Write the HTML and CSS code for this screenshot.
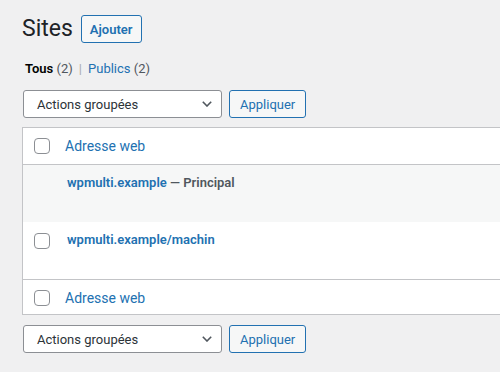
FILE: index.html
```html
<!DOCTYPE html>
<html lang="fr">
<head>
<meta charset="utf-8">
<title>Sites</title>
<link rel="stylesheet" href="styles.css">
</head>
<body>
<div class="wrap">
  <div class="page-head">
    <h1 class="page-title">Sites</h1>
    <a class="btn-add" href="#">Ajouter</a>
  </div>

  <ul class="filters">
    <li><a class="current" href="#">Tous</a> <span class="count">(2)</span></li>
    <li class="sep">|</li>
    <li><a href="#">Publics</a> <span class="count">(2)</span></li>
  </ul>

  <div class="tablenav">
    <div class="select">
      <span>Actions groupées</span>
      <svg class="chev" width="10" height="6" viewBox="0 0 10 6"><path d="M0.8 0.8 L5 5 L9.2 0.8" fill="none" stroke="#50575e" stroke-width="1.6"/></svg>
    </div>
    <button class="btn-apply" type="button">Appliquer</button>
  </div>

  <div class="table">
    <div class="row head">
      <div class="cb"><input type="checkbox" class="check"></div>
      <a class="col-link" href="#">Adresse web</a>
    </div>
    <div class="row site alt">
      <div class="cb"></div>
      <div class="site-name"><a href="#">wpmulti.example</a> <span class="muted">— Principal</span></div>
    </div>
    <div class="row site">
      <div class="cb"><input type="checkbox" class="check"></div>
      <div class="site-name"><a href="#">wpmulti.example/machin</a></div>
    </div>
    <div class="row foot">
      <div class="cb"><input type="checkbox" class="check"></div>
      <a class="col-link" href="#">Adresse web</a>
    </div>
  </div>

  <div class="tablenav bottom">
    <div class="select">
      <span>Actions groupées</span>
      <svg class="chev" width="10" height="6" viewBox="0 0 10 6"><path d="M0.8 0.8 L5 5 L9.2 0.8" fill="none" stroke="#50575e" stroke-width="1.6"/></svg>
    </div>
    <button class="btn-apply" type="button">Appliquer</button>
  </div>
</div>
</body>
</html>
```
FILE: styles.css
```css
html, body {
  margin: 0;
  padding: 0;
  background: #f0f0f1;
  overflow: hidden;
}
body {
  font-family: Roboto, "Liberation Sans", sans-serif;
  color: #3c434a;
  font-size: 13px;
}
a { text-decoration: none; color: #2271b1; }

.wrap {
  padding: 15px 0 0 22px;
  width: 540px;
}

.page-head {
  display: flex;
  align-items: center;
  gap: 8px;
  height: 28px;
}
.page-title {
  margin: 0;
  font-size: 23px;
  font-weight: 400;
  line-height: 28px;
  color: #1d2327;
}
.btn-add {
  display: inline-flex;
  align-items: center;
  height: 26px;
  padding: 0 8px;
  border: 1px solid #2271b1;
  border-radius: 3px;
  background: #f6f7f7;
  color: #2271b1;
  font-size: 13px;
  font-weight: 600;
}

.filters {
  list-style: none;
  margin: 16px 0 0 0;
  padding: 0 0 0 3px;
  display: flex;
  gap: 5px;
  line-height: 20px;
  font-size: 13px;
  color: #50575e;
}
.filters a.current { color: #000; font-weight: 600; }
.filters .sep { color: #a7aaad; padding: 0 1px; }
.count { color: #50575e; }

.tablenav {
  margin-top: 11px;
  display: flex;
  gap: 7px;
  height: 28px;
}
.tablenav.bottom { margin-top: 10px; }
.select {
  box-sizing: border-box;
  width: 199px;
  height: 28px;
  margin-left: 1px;
  border: 1px solid #8c8f94;
  border-radius: 3px;
  background: #fff;
  display: flex;
  align-items: center;
  justify-content: space-between;
  padding: 0 9px 0 13px;
  font-size: 13px;
  color: #2c3338;
}
.btn-apply {
  box-sizing: border-box;
  height: 28px;
  padding: 0 10px;
  border: 1px solid #2271b1;
  border-radius: 3px;
  background: #f6f7f7;
  color: #2271b1;
  font-family: Roboto, "Liberation Sans", sans-serif;
  font-size: 13px;
}

.table {
  margin-top: 9px;
  border: 1px solid #c3c4c7;
  background: #fff;
}
.row {
  display: flex;
  align-items: flex-start;
}
.row.head {
  height: 36px;
  border-bottom: 1px solid #c3c4c7;
}
.row.foot {
  height: 34px;
  border-top: 1px solid #c3c4c7;
}
.row.site { height: 57px; }
.row.alt { background: #f6f7f7; }

.cb {
  width: 31px;
  padding-left: 11px;
  padding-top: 10px;
  flex: none;
}
.row.site .cb { padding-top: 11px; }

.check {
  appearance: none;
  -webkit-appearance: none;
  margin: 0;
  display: block;
  width: 16px;
  height: 16px;
  box-sizing: border-box;
  border: 1px solid #8c8f94;
  border-radius: 4px;
  background: #fff;
}

.col-link {
  font-size: 14px;
  line-height: 20px;
  padding-top: 8px;
}
.site-name {
  padding: 8px 0 0 2px;
  font-size: 13px;
  line-height: 19px;
  font-weight: 600;
}
.muted { color: #50575e; }
```
